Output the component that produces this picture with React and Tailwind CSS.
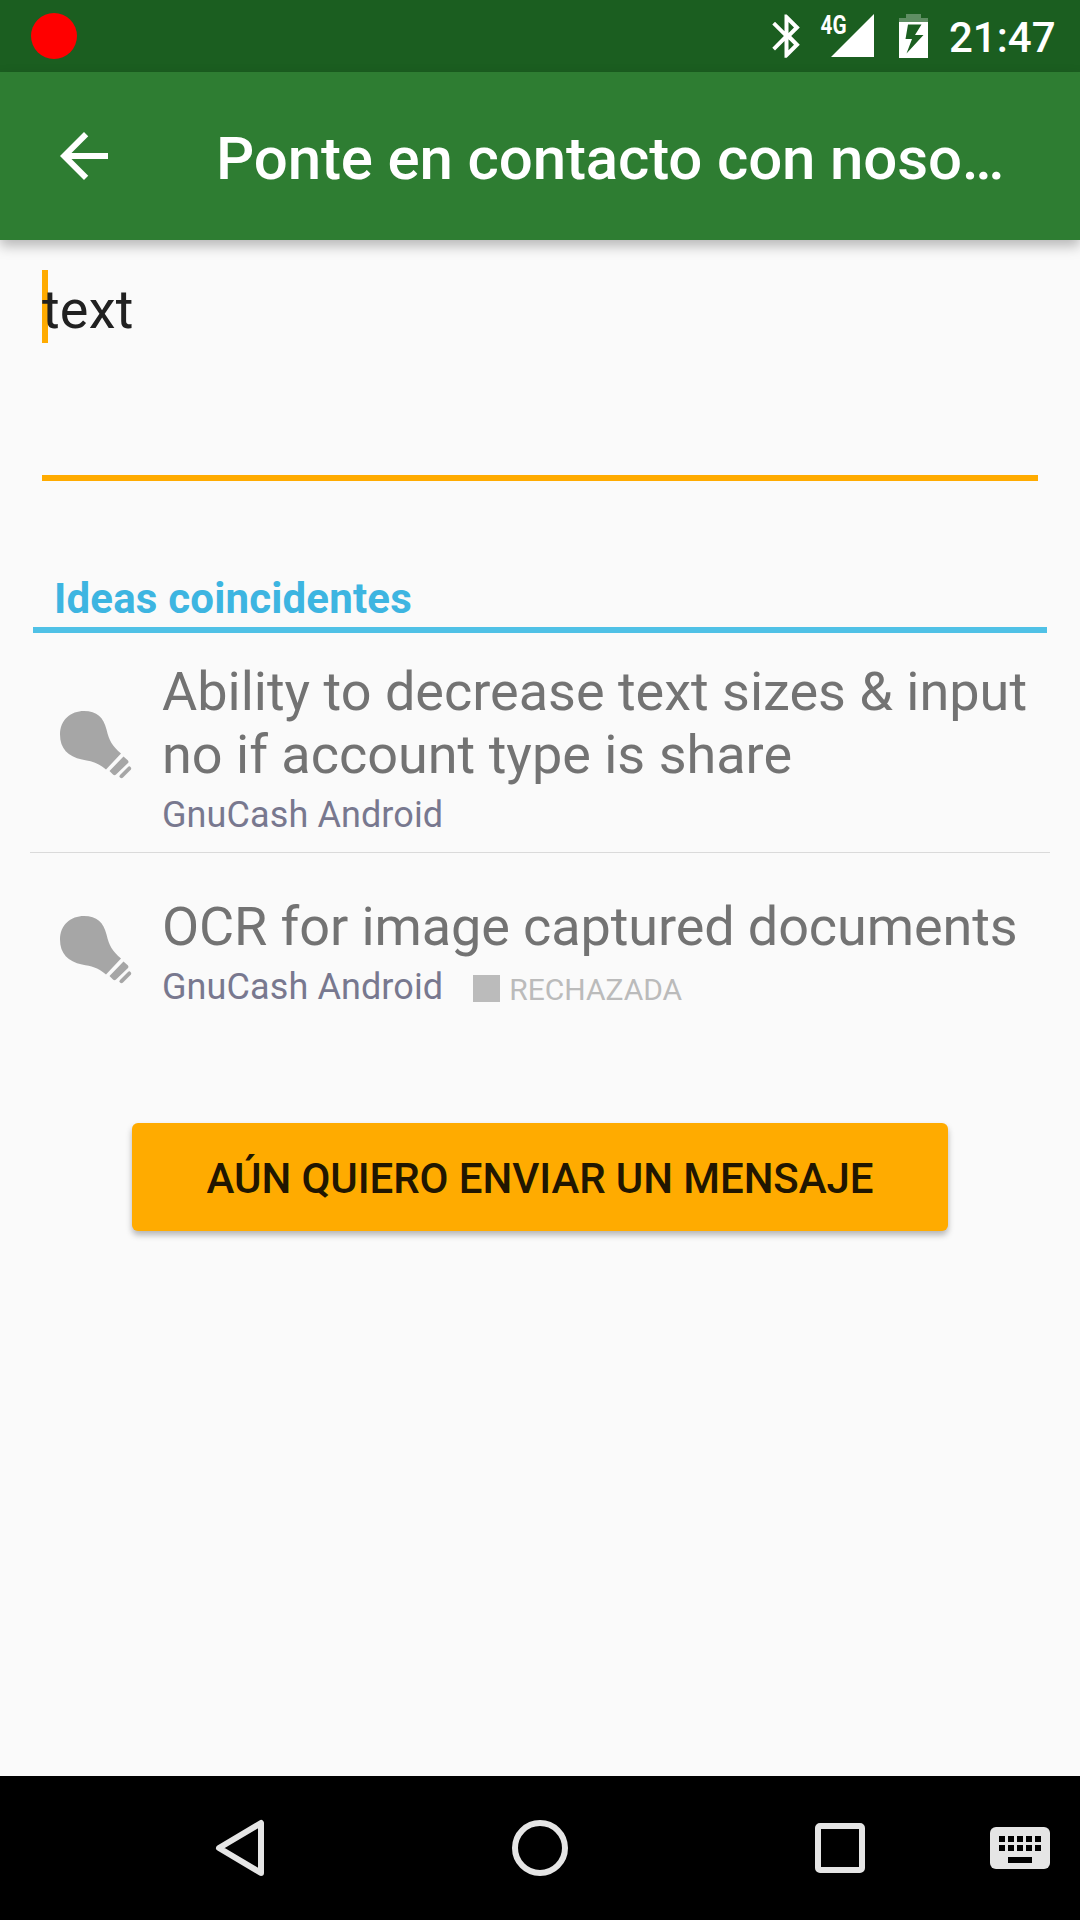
const ideas = [
  { title: 'Ability to decrease text sizes & input no if account type is share', forum: 'GnuCash Android' },
  { title: 'OCR for image captured documents', forum: 'GnuCash Android', status: 'RECHAZADA' },
];

function Bulb() {
  return (
    <svg className="h-[72px] w-[72px] shrink-0" viewBox="0 0.5 72 72" fill="#a6a6a6">
      <path d="M0 26C0 11 11 2.500 24 2.500C37 2.500 43.500 9 46.500 21C49.500 33 52 37 61 45L46 61C37 53.500 32 53 22 51C8 48 0 40 0 26Z" />
      <path d="M63.500 48L68 52Q69 53.500 68 54.500L56 66Q54.500 67.500 53 66L49.500 62.500Z" />
      <path d="M70 58Q72 59.500 71 61L63 69Q61.500 70.500 60 69Q58.500 68 60 66.500L68 58.500Q69 57.500 70 58Z" />
    </svg>
  );
}

function StatusBar() {
  return (
    <header className="flex h-[72px] items-center bg-[#1b5e20] pl-[31px] pr-6">
      <div className="size-[46px] rounded-full bg-[#ff0000]" />
      <div className="ml-auto flex items-center">
        <svg className="h-[72px] w-[180px]" viewBox="760 0 180 72" fill="#fff">
          <path d="M799.800 27.500L786.700 14.400H784.500V31.300L775 21.800L772.300 24.500L783.900 36.100L772.300 47.700L775 50.400L784.500 40.900V57.800H786.700L799.800 44.700L791.200 36.100ZM788.500 22L794 27.500L788.500 33ZM794 44.700L788.500 50.200V39.200Z" />
          <text x="820.500" y="33.500" fontSize="26" fontWeight="700" fontFamily="Roboto, sans-serif" textLength="26" lengthAdjust="spacingAndGlyphs">4G</text>
          <path d="M874 14V57H831Z" />
          <path d="M899 22V18H906V14H921V18H928V22Z" fillOpacity=".3" />
          <path fillRule="evenodd" d="M899 22H928V58H899ZM908 24.500L905.500 39H912L906.500 53.500L923.500 35H915L921.500 24.500Z" />
        </svg>
        <span className="ml-[9px] w-[107px] whitespace-nowrap pt-[3px] text-[42px] font-medium leading-[69px] text-white">21:47</span>
      </div>
    </header>
  );
}

function Toolbar() {
  return (
    <div className="z-10 flex h-[168px] items-center bg-[#2e7d32] pl-12 text-white shadow-[0_6px_12px_rgba(0,0,0,0.27)]">
      <svg className="size-[72px]" viewBox="0 0 24 24" fill="currentColor">
        <path d="M20 11H7.830L13.420 5.410L12 4L4 12L12 20L13.410 18.590L7.830 13H20Z" />
      </svg>
      <h1 className="ml-24 mt-[5px] whitespace-nowrap text-[60px] font-medium leading-[70px] tracking-[-0.14px]">Ponte en contacto con noso…</h1>
    </div>
  );
}

function Idea({ idea, first }) {
  return (
    <li className={first ? 'flex h-[220px] items-center border-b border-[#dadada] pl-[30px] pt-1' : 'flex h-[194px] items-center pl-[30px]'}>
      <Bulb />
      <div className={first ? 'ml-[30px] pt-[7px]' : 'ml-[30px] pt-[6px] tracking-[-0.1px]'}>
        <p className="w-[880px] text-[54px] leading-[63px] text-[#737373]">{idea.title}</p>
        <div className={first ? 'mt-[5px] flex items-center text-[36px] leading-[42px] tracking-[0.1px] text-[#78788f]' : 'mt-px flex items-center text-[36px] leading-[42px] tracking-[0.1px] text-[#78788f]'}>
          <span className="mt-[3px]">{idea.forum}</span>
          {idea.status && (
            <div className="ml-[30px] mt-[10px] flex items-center text-[30px] tracking-normal text-[#bbbbbb]">
              <i className="mr-[9px] size-[27px] -translate-y-[2px] bg-[#bbbbbb]" />
              {idea.status}
            </div>
          )}
        </div>
      </div>
    </li>
  );
}

function NavBar() {
  return (
    <nav className="h-36 bg-black">
      <svg className="h-36 w-[1080px]" viewBox="0 0 1080 144" fill="none" stroke="#e5e5e5" strokeWidth="6" strokeLinejoin="round">
        <path d="M219 72L261 47V97Z" />
        <circle cx="540" cy="72" r="25" />
        <rect x="818" y="50" width="44" height="44" rx="2" />
        <rect x="990" y="51" width="60" height="42" rx="6" fill="#e5e5e5" stroke="none" />
        <path d="M999 63H1041M999 72H1041" stroke="#000" strokeDasharray="6 3" />
        <path d="M1008 84H1032" stroke="#000" />
      </svg>
    </nav>
  );
}

export default function App() {
  return (
    <div className="flex h-[1920px] w-[1080px] flex-col overflow-hidden bg-[#fafafa] font-[Roboto,sans-serif]">
      <StatusBar />
      <Toolbar />
      <main className="flex-1">
        <div className="mx-[42px] flex h-[241px] items-start border-b-[6px] border-[#ffab00] pt-[30px]">
          <div className="-mr-[6px] h-[73px] w-[6px] bg-[#ffab00]" />
          <span className="relative mt-[8px] text-[54px] leading-[63px] tracking-[0.2px] text-[#212121]">text</span>
        </div>
        <h2 className="mx-[33px] mt-[93px] h-[59px] border-b-[6px] border-[#4fc1e6] pl-[21px] text-[42px] font-bold leading-[49px] tracking-[0.18px] text-[#3db5e1]">Ideas coincidentes</h2>
        <ul className="mx-[30px]">
          {ideas.map((idea, i) => <Idea key={idea.title} idea={idea} first={i === 0} />)}
        </ul>
        <button className="mx-auto mt-[76px] block h-[108px] w-[816px] rounded-[6px] bg-[#ffab00] pt-[3px] text-[42px] font-medium tracking-[-0.08px] text-[#211600] shadow-[0_4px_6px_rgba(0,0,0,0.28)]">AÚN QUIERO ENVIAR UN MENSAJE</button>
      </main>
      <NavBar />
    </div>
  );
}
